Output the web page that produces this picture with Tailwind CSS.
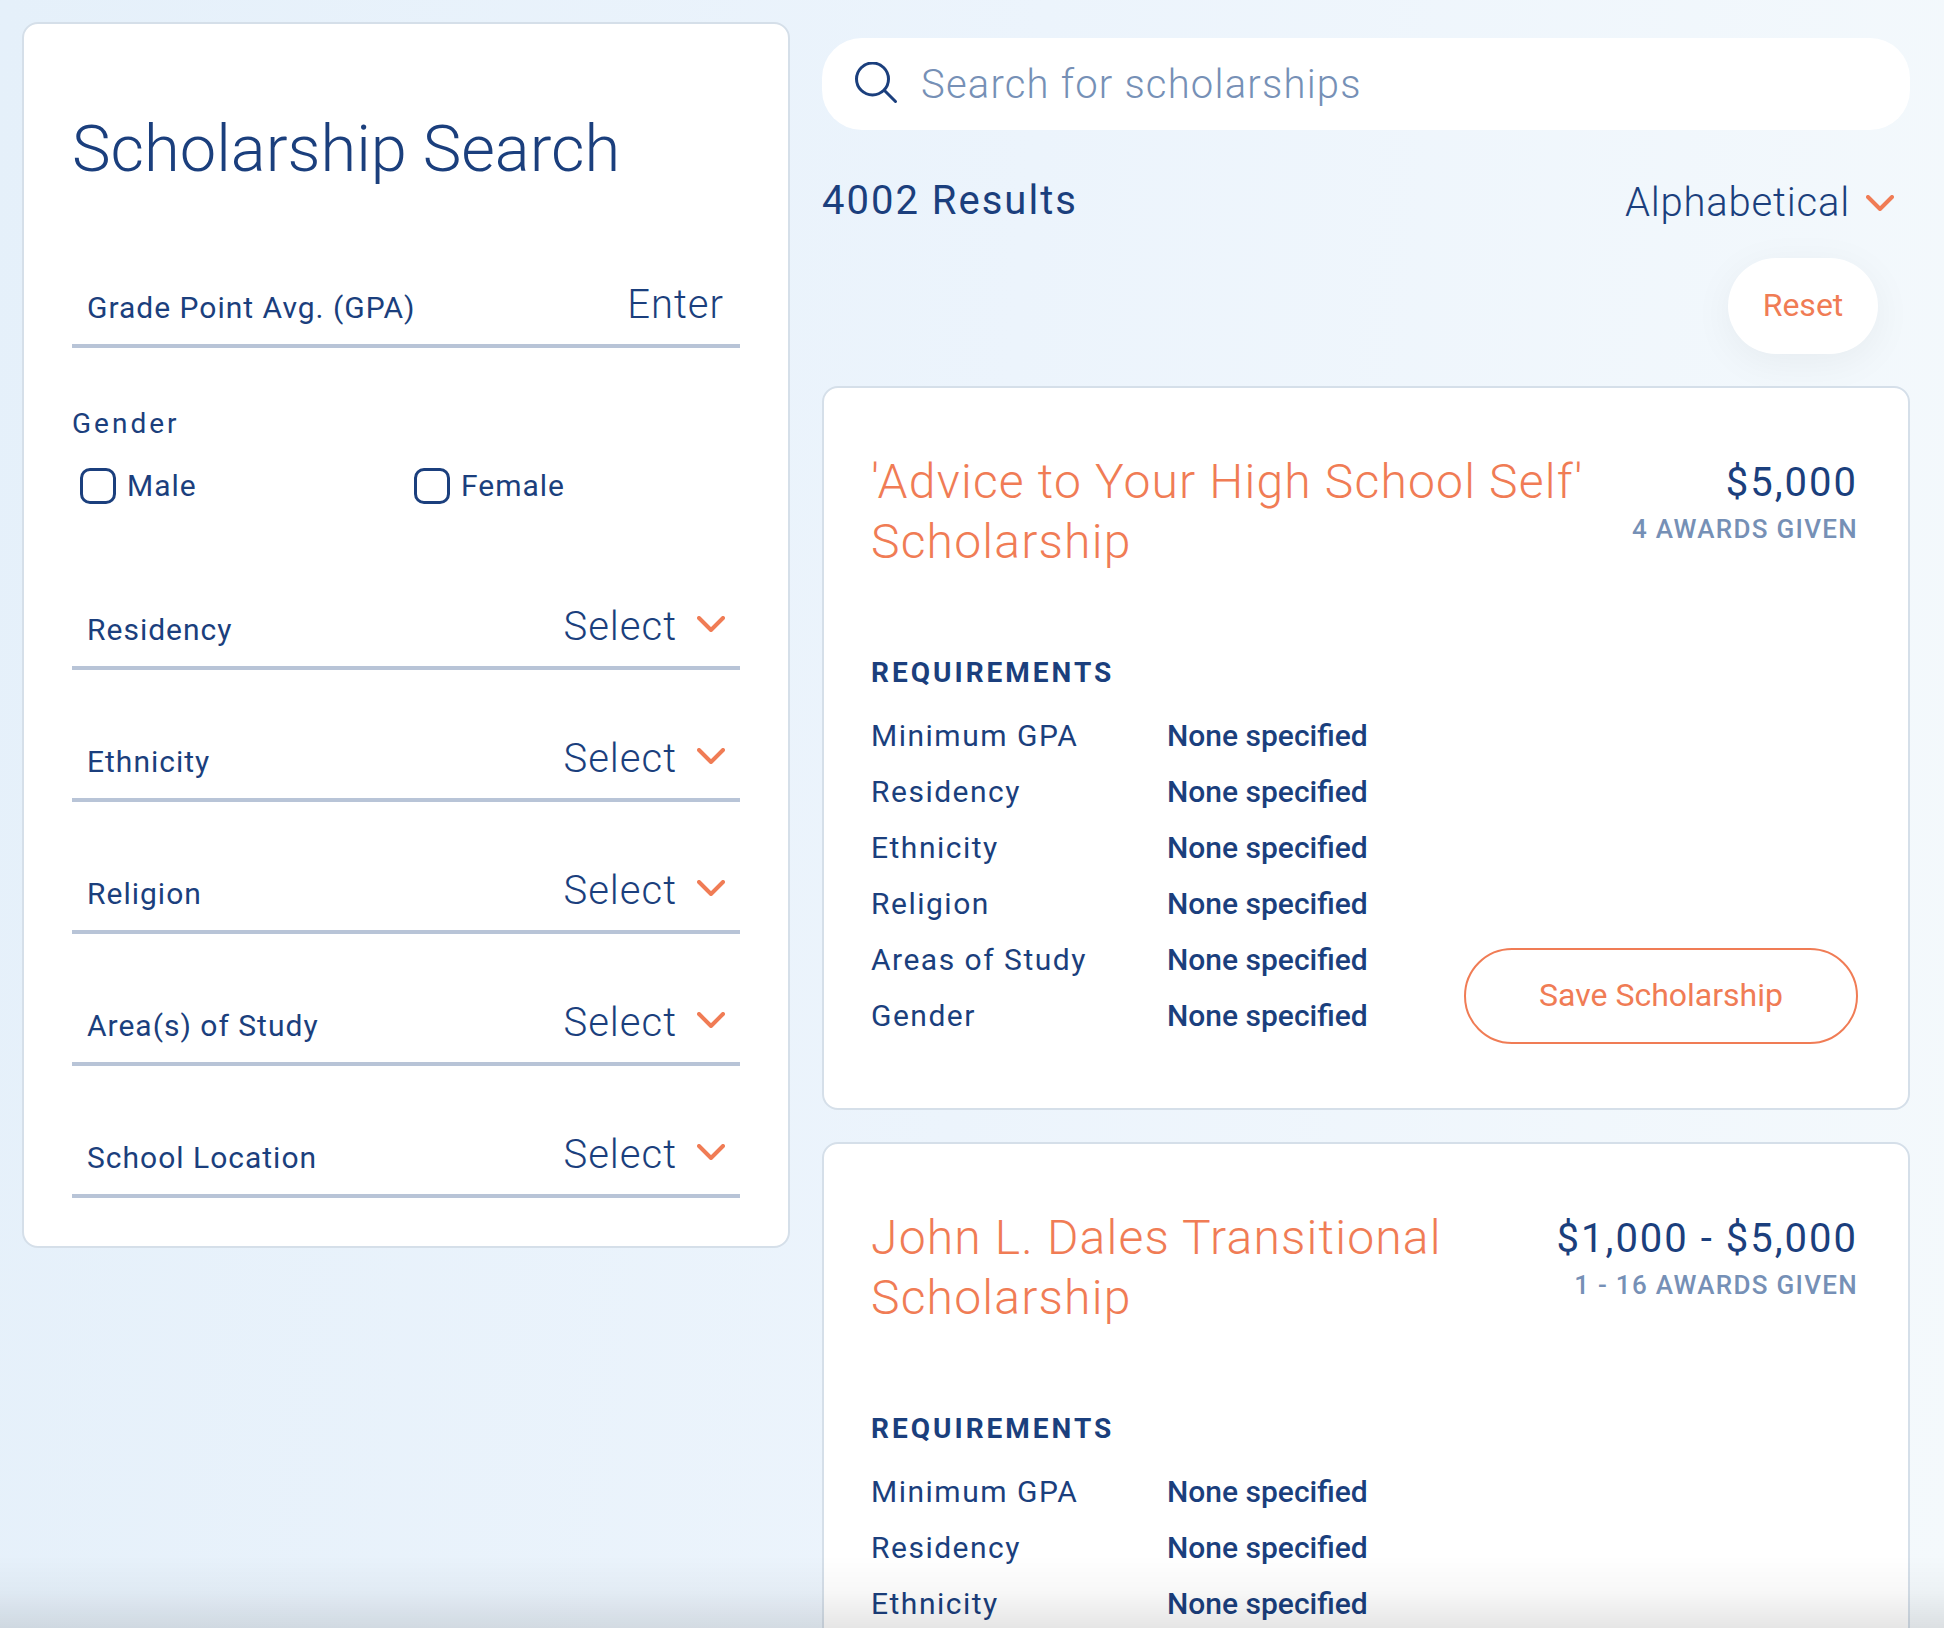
<!DOCTYPE html>
<html lang="en">
<head>
<meta charset="utf-8">
<meta name="viewport" content="width=device-width, initial-scale=1">
<title>Scholarship Search</title>
<script src="https://cdn.jsdelivr.net/npm/@tailwindcss/browser@4"></script>
</head>
<body class="font-[Roboto,sans-serif] text-[#1b3f7d]">
<div class="h-screen overflow-y-auto [scrollbar-width:none] bg-linear-95 from-[#e5f0fa] via-[#ecf4fc] via-50% to-[#f4f9fc]">
<div class="grid grid-cols-[12fr_17fr] items-start gap-8 pt-[22px] pl-[22px] pr-[34px] pb-8">

  <!-- Filters -->
  <aside class="rounded-2xl border-2 border-[#d5dfe9] bg-white px-12 pt-[85px] pb-12">
    <h1 class="text-[65px] leading-[80px] font-light">Scholarship Search</h1>
    <form>
      <div class="mt-[92px] flex items-baseline border-b-4 border-[#b8c4d7] px-[15px] pb-[15px]">
        <label for="gpa" class="shrink-0 text-[30px] leading-10 tracking-[1px]">Grade Point Avg. (GPA)</label>
        <input id="gpa" type="text" placeholder="Enter" class="h-12 min-w-0 flex-1 pr-px text-right text-[40px] leading-[48px] font-light tracking-[1px] outline-none placeholder:text-[#1b3f7d]">
      </div>

      <fieldset class="mt-[60px]">
        <legend class="text-[28px] leading-8 tracking-[3px]">Gender</legend>
        <div class="mt-7 grid grid-cols-2">
          <label class="flex h-9 items-center gap-[11px] pl-2 text-[30px] leading-9 tracking-[1px]"><input type="checkbox" class="size-9 appearance-none rounded-[10px] border-3 border-[#1b3f7d] checked:bg-[#1b3f7d]">Male</label>
          <label class="flex h-9 items-center gap-[11px] pl-2 text-[30px] leading-9 tracking-[1px]"><input type="checkbox" class="size-9 appearance-none rounded-[10px] border-3 border-[#1b3f7d] checked:bg-[#1b3f7d]">Female</label>
        </div>
      </fieldset>

      <div class="mt-[99px] flex flex-col gap-[65px]">
        <div class="flex items-baseline border-b-4 border-[#b8c4d7] px-[15px] pb-[15px]">
          <label for="residency" class="shrink-0 text-[30px] leading-10 tracking-[1px]">Residency</label>
          <select id="residency" class="mr-5 h-12 min-w-0 flex-1 appearance-none text-[40px] leading-[48px] font-light tracking-[1px] outline-none [text-align-last:right]"><option>Select</option></select>
          <svg class="h-4 w-7 -translate-y-2" viewBox="0 0 28 16" fill="none" stroke="#f07c55" stroke-width="4" stroke-linecap="round" stroke-linejoin="round" aria-hidden="true"><path d="M2 2l12 12L26 2"/></svg>
        </div>
        <div class="flex items-baseline border-b-4 border-[#b8c4d7] px-[15px] pb-[15px]">
          <label for="ethnicity" class="shrink-0 text-[30px] leading-10 tracking-[1px]">Ethnicity</label>
          <select id="ethnicity" class="mr-5 h-12 min-w-0 flex-1 appearance-none text-[40px] leading-[48px] font-light tracking-[1px] outline-none [text-align-last:right]"><option>Select</option></select>
          <svg class="h-4 w-7 -translate-y-2" viewBox="0 0 28 16" fill="none" stroke="#f07c55" stroke-width="4" stroke-linecap="round" stroke-linejoin="round" aria-hidden="true"><path d="M2 2l12 12L26 2"/></svg>
        </div>
        <div class="flex items-baseline border-b-4 border-[#b8c4d7] px-[15px] pb-[15px]">
          <label for="religion" class="shrink-0 text-[30px] leading-10 tracking-[1px]">Religion</label>
          <select id="religion" class="mr-5 h-12 min-w-0 flex-1 appearance-none text-[40px] leading-[48px] font-light tracking-[1px] outline-none [text-align-last:right]"><option>Select</option></select>
          <svg class="h-4 w-7 -translate-y-2" viewBox="0 0 28 16" fill="none" stroke="#f07c55" stroke-width="4" stroke-linecap="round" stroke-linejoin="round" aria-hidden="true"><path d="M2 2l12 12L26 2"/></svg>
        </div>
        <div class="flex items-baseline border-b-4 border-[#b8c4d7] px-[15px] pb-[15px]">
          <label for="study" class="shrink-0 text-[30px] leading-10 tracking-[1px]">Area(s) of Study</label>
          <select id="study" class="mr-5 h-12 min-w-0 flex-1 appearance-none text-[40px] leading-[48px] font-light tracking-[1px] outline-none [text-align-last:right]"><option>Select</option></select>
          <svg class="h-4 w-7 -translate-y-2" viewBox="0 0 28 16" fill="none" stroke="#f07c55" stroke-width="4" stroke-linecap="round" stroke-linejoin="round" aria-hidden="true"><path d="M2 2l12 12L26 2"/></svg>
        </div>
        <div class="flex items-baseline border-b-4 border-[#b8c4d7] px-[15px] pb-[15px]">
          <label for="location" class="shrink-0 text-[30px] leading-10 tracking-[1px]">School Location</label>
          <select id="location" class="mr-5 h-12 min-w-0 flex-1 appearance-none text-[40px] leading-[48px] font-light tracking-[1px] outline-none [text-align-last:right]"><option>Select</option></select>
          <svg class="h-4 w-7 -translate-y-2" viewBox="0 0 28 16" fill="none" stroke="#f07c55" stroke-width="4" stroke-linecap="round" stroke-linejoin="round" aria-hidden="true"><path d="M2 2l12 12L26 2"/></svg>
        </div>
      </div>
    </form>
  </aside>

  <!-- Results -->
  <main class="pt-4">
    <label class="flex h-[92px] items-center gap-[23px] rounded-[40px] bg-white px-8">
      <svg class="size-[44px] shrink-0" viewBox="0 0 44 44" fill="none" stroke="#1b3f7d" stroke-width="3" stroke-linecap="round" aria-hidden="true"><circle cx="18.5" cy="17" r="16"/><path d="M30.5 28.5L41.500 39.500"/></svg>
      <input type="search" aria-label="Search for scholarships" placeholder="Search for scholarships" class="mt-[2px] h-12 min-w-0 flex-1 text-[40px] leading-[48px] font-light tracking-[0.03em] outline-none placeholder:text-[#7690b6]">
    </label>

    <div class="mt-[47px] flex items-start justify-between pr-4">
      <h2 class="text-[40px] leading-[48px] tracking-wider">4002 Results</h2>
      <div class="flex items-center gap-4 pt-[2px]">
        <select aria-label="Sort by" class="h-12 appearance-none text-[40px] leading-[48px] font-light tracking-[0.02em] outline-none"><option>Alphabetical</option></select>
        <svg class="h-4 w-7" viewBox="0 0 28 16" fill="none" stroke="#f07c55" stroke-width="4" stroke-linecap="round" stroke-linejoin="round" aria-hidden="true"><path d="M2 2l12 12L26 2"/></svg>
      </div>
    </div>

    <div class="mt-[31px] flex justify-end pr-8">
      <button type="button" class="h-24 w-[150px] rounded-full bg-white pb-[2px] text-[32px] leading-10 text-[#f07c55] shadow-[0_8px_40px_rgba(0,0,0,0.05)]">Reset</button>
    </div>

    <div class="mt-8 flex flex-col gap-8">
      <article class="rounded-2xl border-2 border-[#d5dfe9] bg-white py-16 pr-[50px] pl-[47px]">
        <header class="flex items-start justify-between gap-6">
          <h3 class="text-[48px] leading-[60px] font-light tracking-wide text-[#f07c55]">'Advice to Your High School Self' Scholarship</h3>
          <div class="shrink-0 pt-[7px] text-right">
            <p class="text-[40px] leading-[48px] tracking-wider">$5,000</p>
            <p class="mt-[6px] text-[26px] leading-8 font-medium tracking-wider text-[#7690b6]">4 AWARDS GIVEN</p>
          </div>
        </header>
        <h4 class="mt-[85px] text-[28px] leading-8 font-bold tracking-[3px]">REQUIREMENTS</h4>
        <div class="mt-[19px] flex items-end justify-between">
          <table class="text-left text-[30px] leading-[56px]">
            <tbody>
              <tr><th scope="row" class="w-[296px] p-0 font-normal tracking-wider">Minimum GPA</th><td class="p-0 font-medium">None specified</td></tr>
              <tr><th scope="row" class="p-0 font-normal tracking-wider">Residency</th><td class="p-0 font-medium">None specified</td></tr>
              <tr><th scope="row" class="p-0 font-normal tracking-wider">Ethnicity</th><td class="p-0 font-medium">None specified</td></tr>
              <tr><th scope="row" class="p-0 font-normal tracking-wider">Religion</th><td class="p-0 font-medium">None specified</td></tr>
              <tr><th scope="row" class="p-0 font-normal tracking-wider">Areas of Study</th><td class="p-0 font-medium">None specified</td></tr>
              <tr><th scope="row" class="p-0 font-normal tracking-wider">Gender</th><td class="p-0 font-medium">None specified</td></tr>
            </tbody>
          </table>
          <button type="button" class="h-24 w-[394px] rounded-full border-2 border-[#f07c55] pb-[2px] text-[32px] leading-10 text-[#f07c55]">Save Scholarship</button>
        </div>
      </article>

      <article class="rounded-2xl border-2 border-[#d5dfe9] bg-white py-16 pr-[50px] pl-[47px]">
        <header class="flex items-start justify-between gap-6">
          <h3 class="text-[48px] leading-[60px] font-light tracking-wide text-[#f07c55]">John L. Dales Transitional Scholarship</h3>
          <div class="shrink-0 pt-[7px] text-right">
            <p class="text-[40px] leading-[48px] tracking-wider">$1,000 - $5,000</p>
            <p class="mt-[6px] text-[26px] leading-8 font-medium tracking-wider text-[#7690b6]">1 - 16 AWARDS GIVEN</p>
          </div>
        </header>
        <h4 class="mt-[85px] text-[28px] leading-8 font-bold tracking-[3px]">REQUIREMENTS</h4>
        <div class="mt-[19px] flex items-end justify-between">
          <table class="text-left text-[30px] leading-[56px]">
            <tbody>
              <tr><th scope="row" class="w-[296px] p-0 font-normal tracking-wider">Minimum GPA</th><td class="p-0 font-medium">None specified</td></tr>
              <tr><th scope="row" class="p-0 font-normal tracking-wider">Residency</th><td class="p-0 font-medium">None specified</td></tr>
              <tr><th scope="row" class="p-0 font-normal tracking-wider">Ethnicity</th><td class="p-0 font-medium">None specified</td></tr>
            </tbody>
          </table>
        </div>
      </article>
    </div>
  </main>
</div>
</div>
<!-- Fade at the foot of the window -->
<div class="pointer-events-none fixed inset-x-0 bottom-0 h-[72px] bg-linear-to-t from-black/10 via-black/3 to-transparent"></div>
</body>
</html>
